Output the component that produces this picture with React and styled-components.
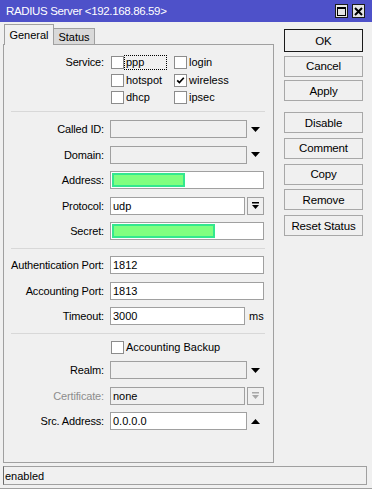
import React from 'react'
import styled, { createGlobalStyle } from 'styled-components'

const GlobalStyle = createGlobalStyle`
  html, body {
    margin: 0;
    padding: 0;
    background: #f0f0f0;
  }
  body {
    font-family: "Liberation Sans", Arial, sans-serif;
    font-size: 11px;
    color: #000;
  }
`

const Window = styled.div`
  width: 372px;
  height: 489px;
  box-sizing: border-box;
  display: flex;
  flex-direction: column;
  background: #f0f0f0;
  border-bottom: 1px solid #a0a0a0;
`

const TitleBar = styled.div`
  height: 22px;
  flex: none;
  display: flex;
  align-items: center;
  padding: 0 7px 0 6px;
  background: #4e51c9;
  color: #fff;
  font-size: 11.5px;
  letter-spacing: -0.35px;
`

const WinButtons = styled.div`
  margin-left: auto;
  display: flex;
  gap: 4px;
`

const WinButton = styled.div`
  width: 13px;
  height: 14px;
  box-sizing: border-box;
  border: 1px solid #1a1a1a;
  background: #e4e4e4;
  display: flex;
  align-items: center;
  justify-content: center;
`

const Main = styled.div`
  height: 441px;
  flex: none;
  box-sizing: border-box;
  display: flex;
  padding: 2px 0 0 3px;
`

const LeftCol = styled.div`
  width: 271px;
  display: flex;
  flex-direction: column;
`

const TabBar = styled.div`
  height: 20px;
  display: flex;
  align-items: flex-end;
  padding-left: 1px;
  position: relative;
  z-index: 1;
`

const Tab = styled.div`
  box-sizing: border-box;
  width: ${({ $w }) => $w}px;
  height: ${({ $active }) => ($active ? 21 : 16)}px;
  margin-bottom: ${({ $active }) => ($active ? -1 : 0)}px;
  border: 1px solid #a0a0a0;
  border-bottom: none;
  ${({ $active }) => !$active && 'border-left: none;'}
  background: ${({ $active }) => ($active ? '#f0f0f0' : '#d9d9d9')};
  display: flex;
  align-items: center;
  justify-content: center;
  padding-top: ${({ $active }) => ($active ? 0 : 1)}px;
`

const Panel = styled.div`
  flex: 1;
  box-sizing: border-box;
  border: 1px solid #a0a0a0;
  padding: 8.75px 9px 0 0;
  display: flex;
  flex-direction: column;
`

const FormRow = styled.div`
  display: grid;
  grid-template-columns: 100px 154px;
  column-gap: 6px;
  align-items: ${({ $top }) => ($top ? 'start' : 'center')};
`

const Label = styled.div`
  text-align: right;
  white-space: nowrap;
  letter-spacing: -0.15px;
  color: ${({ $disabled }) => ($disabled ? '#8d8d8d' : '#000')};
  padding-top: ${({ $pt }) => $pt || 0}px;
`

const Options = styled.div`
  display: grid;
  grid-template-columns: 56px 56px;
  grid-auto-rows: 17.5px;
  column-gap: 7px;
  margin-left: 1px;
`

const Option = styled.div`
  display: flex;
  align-items: center;
`

const Box = styled.div`
  flex: none;
  width: 13px;
  height: 13px;
  box-sizing: border-box;
  border: 1px solid #8c8c8c;
  background: #fff;
  display: flex;
  align-items: center;
  justify-content: center;
`

const OptionText = styled.div`
  box-sizing: border-box;
  height: 15px;
  width: 43px;
  padding-left: 1px;
  line-height: 13px;
  white-space: nowrap;
  border: 1px dotted ${({ $focus }) => ($focus ? '#000' : 'transparent')};
`

const Separator = styled.div`
  height: 1px;
  flex: none;
  background: #d8d8d8;
  margin: ${({ $mt }) => $mt}px -1px ${({ $mb }) => $mb}px 7px;
`

const Section = styled.div`
  display: flex;
  flex-direction: column;
  gap: ${({ $gap }) => $gap}px;
`

const Field = styled.div`
  display: flex;
  align-items: center;
  height: 18px;
`

const InputBox = styled.div`
  box-sizing: border-box;
  width: ${({ $w }) => $w}px;
  height: 18px;
  border: 1px solid #a0a0a0;
  background: ${({ $gray }) => ($gray ? '#f0f0f0' : '#fff')};
  padding-left: 2px;
  display: flex;
  align-items: center;
  white-space: nowrap;
`

const Masked = styled.div`
  box-sizing: border-box;
  width: ${({ $w }) => $w}px;
  height: 14px;
  margin-left: -1px;
  border: 2px solid #33e88e;
  background: #80ff80;
`

const ArrowSlot = styled.div`
  width: 17px;
  height: 18px;
  display: flex;
  align-items: center;
  justify-content: center;
`

const SmallButton = styled.div`
  margin-left: 2px;
  box-sizing: border-box;
  width: 17px;
  height: 18px;
  border: 1px solid #a0a0a0;
  background: #f0f0f0;
  display: flex;
  align-items: center;
  justify-content: center;
`

const Unit = styled.span`
  margin-left: 4px;
`

const CheckRow = styled.div`
  height: 14px;
  display: flex;
  align-items: center;
  margin-left: 107px;
`

const CheckLabel = styled.span`
  margin-left: 2px;
`

const RightCol = styled.div`
  width: 79px;
  margin-left: 10px;
  padding-top: 5px;
  display: flex;
  flex-direction: column;
`

const ButtonGroup = styled.div`
  display: flex;
  flex-direction: column;
  gap: ${({ $gap }) => $gap}px;
  margin-bottom: ${({ $mb }) => $mb || 0}px;
`

const Button = styled.div`
  box-sizing: border-box;
  height: ${({ $primary }) => ($primary ? 23 : 21)}px;
  border: 1px solid ${({ $primary }) => ($primary ? '#1a1a1a' : '#a8a8a8')};
  background: #f0f0f0;
  display: flex;
  align-items: center;
  justify-content: center;
  font-size: 11.5px;
  letter-spacing: -0.15px;
`

const StatusBar = styled.div`
  margin: 3px 5px 0 3px;
  height: 19px;
  box-sizing: border-box;
  border: 1px solid #a0a0a0;
  border-left-color: #6a6a6a;
  padding-left: 1px;
  display: flex;
  align-items: center;
`

const DownArrow = () => (
  <svg width="9" height="5" viewBox="0 0 9 5">
    <polygon points="0,0 9,0 4.5,5" fill="#000" />
  </svg>
)

const UpArrow = () => (
  <svg width="9" height="5" viewBox="0 0 9 5">
    <polygon points="0,5 9,5 4.5,0" fill="#000" />
  </svg>
)

const DropIcon = ({ color = '#000' }) => (
  <svg width="9" height="9" viewBox="0 0 9 9">
    <rect x="1" y="1" width="7" height="1.5" fill={color} />
    <polygon points="1,4 8,4 4.5,8" fill={color} />
  </svg>
)

const Check = () => (
  <svg width="9" height="9" viewBox="0 0 9 9">
    <path d="M1.2 4.3 L3.4 6.6 L7.8 1.8" stroke="#000" strokeWidth="1.7" fill="none" />
  </svg>
)

const services = [
  { name: 'ppp', focus: true },
  { name: 'login' },
  { name: 'hotspot' },
  { name: 'wireless', checked: true },
  { name: 'dhcp' },
  { name: 'ipsec' }
]

const App = () => (
  <>
    <GlobalStyle />
    <Window>
      <TitleBar>
        RADIUS Server &lt;192.168.86.59&gt;
        <WinButtons>
          <WinButton>
            <svg width="9" height="9" viewBox="0 0 9 9">
              <rect x="0.5" y="0.5" width="8" height="8" fill="none" stroke="#000" strokeWidth="1" />
              <rect x="0" y="0" width="9" height="2" fill="#000" />
            </svg>
          </WinButton>
          <WinButton>
            <svg width="9" height="9" viewBox="0 0 9 9">
              <path d="M1 1 L8 8 M8 1 L1 8" stroke="#000" strokeWidth="2" />
            </svg>
          </WinButton>
        </WinButtons>
      </TitleBar>

      <Main>
        <LeftCol>
          <TabBar>
            <Tab $active $w={50}>General</Tab>
            <Tab $w={41}>Status</Tab>
          </TabBar>
          <Panel>
            <FormRow $top>
              <Label $pt={2}>Service:</Label>
              <Options>
                {services.map(({ name, focus, checked }) => (
                  <Option key={name}>
                    <Box>{checked && <Check />}</Box>
                    <OptionText $focus={focus}>{name}</OptionText>
                  </Option>
                ))}
              </Options>
            </FormRow>

            <Separator $mt={4.75} $mb={8} />

            <Section $gap={7.5}>
              <FormRow>
                <Label>Called ID:</Label>
                <Field>
                  <InputBox $w={137} $gray />
                  <ArrowSlot><DownArrow /></ArrowSlot>
                </Field>
              </FormRow>
              <FormRow>
                <Label>Domain:</Label>
                <Field>
                  <InputBox $w={137} $gray />
                  <ArrowSlot><DownArrow /></ArrowSlot>
                </Field>
              </FormRow>
              <FormRow>
                <Label>Address:</Label>
                <Field>
                  <InputBox $w={154}><Masked $w={73} /></InputBox>
                </Field>
              </FormRow>
              <FormRow>
                <Label>Protocol:</Label>
                <Field>
                  <InputBox $w={135}>udp</InputBox>
                  <SmallButton><DropIcon /></SmallButton>
                </Field>
              </FormRow>
              <FormRow>
                <Label>Secret:</Label>
                <Field>
                  <InputBox $w={154}><Masked $w={103} /></InputBox>
                </Field>
              </FormRow>
            </Section>

            <Separator $mt={8} $mb={7} />

            <Section $gap={7.5}>
              <FormRow>
                <Label>Authentication Port:</Label>
                <Field><InputBox $w={154}>1812</InputBox></Field>
              </FormRow>
              <FormRow>
                <Label>Accounting Port:</Label>
                <Field><InputBox $w={154}>1813</InputBox></Field>
              </FormRow>
              <FormRow>
                <Label>Timeout:</Label>
                <Field>
                  <InputBox $w={135}>3000</InputBox>
                  <Unit>ms</Unit>
                </Field>
              </FormRow>
            </Section>

            <Separator $mt={8} $mb={6} />

            <Section $gap={7}>
              <CheckRow>
                <Box />
                <CheckLabel>Accounting Backup</CheckLabel>
              </CheckRow>
              <Section $gap={7.5}>
                <FormRow>
                  <Label>Realm:</Label>
                  <Field>
                    <InputBox $w={137} $gray />
                    <ArrowSlot><DownArrow /></ArrowSlot>
                  </Field>
                </FormRow>
                <FormRow>
                  <Label $disabled>Certificate:</Label>
                  <Field>
                    <InputBox $w={135} $gray>none</InputBox>
                    <SmallButton><DropIcon color="#a8a8a8" /></SmallButton>
                  </Field>
                </FormRow>
                <FormRow>
                  <Label>Src. Address:</Label>
                  <Field>
                    <InputBox $w={137}>0.0.0.0</InputBox>
                    <ArrowSlot><UpArrow /></ArrowSlot>
                  </Field>
                </FormRow>
              </Section>
            </Section>
          </Panel>
        </LeftCol>

        <RightCol>
          <ButtonGroup $gap={3.5} $mb={11}>
            <Button $primary>OK</Button>
            <Button>Cancel</Button>
            <Button>Apply</Button>
          </ButtonGroup>
          <ButtonGroup $gap={4.75}>
            <Button>Disable</Button>
            <Button>Comment</Button>
            <Button>Copy</Button>
            <Button>Remove</Button>
            <Button>Reset Status</Button>
          </ButtonGroup>
        </RightCol>
      </Main>

      <StatusBar>enabled</StatusBar>
    </Window>
  </>
)

export default App
